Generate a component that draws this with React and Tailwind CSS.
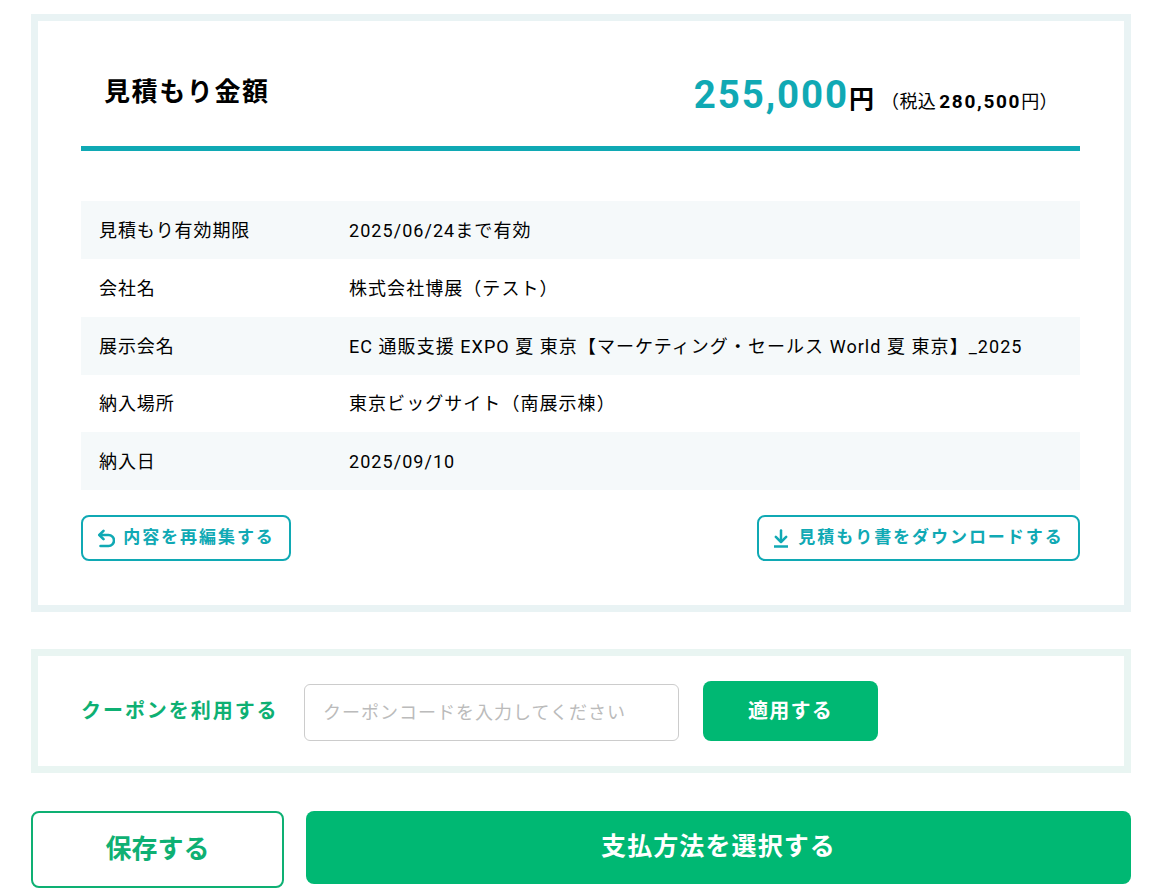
import React from 'react';

const rows = [
    ['見積もり有効期限', '2025/06/24まで有効', 'h-[58px] bg-[#f5f9fa]'],
    ['会社名', '株式会社博展（テスト）', 'h-[58px]'],
    ['展示会名', 'EC 通販支援 EXPO 夏 東京【マーケティング・セールス World 夏 東京】_2025', 'h-[58px] bg-[#f5f9fa]'],
    ['納入場所', '東京ビッグサイト（南展示棟）', 'h-[57px]'],
    ['納入日', '2025/09/10', 'h-[58px] bg-[#f5f9fa]'],
];

const BackIcon = () => (
    <svg width="18" height="19" viewBox="0 0 18 19" fill="none" stroke="currentColor" strokeWidth="2.6" strokeLinecap="round" strokeLinejoin="round">
        <path d="M6.500 1.800 2.300 6 6.500 10.200" />
        <path d="M3 6h8.500a5 5 0 0 1 0 11H3.500" />
    </svg>
);

const DownloadIcon = () => (
    <svg width="16" height="19" viewBox="0 0 16 19" fill="none" stroke="currentColor" strokeWidth="2.500" strokeLinecap="round" strokeLinejoin="round">
        <path d="M8 1.500v11" />
        <path d="M2.800 7.800 8 13l5.200-5.200" />
        <path d="M1 17.500h14" strokeLinecap="butt" />
    </svg>
);

const App = () => {
    return (
        <div className="w-[1157px] h-[896px] overflow-hidden bg-white pt-[14px] pl-[31px] text-black font-['Roboto','Noto_Sans_CJK_JP',sans-serif]">
            {/* 見積もり */}
            <div className="w-[1100px] h-[598px] border-[7px] border-[#e9f3f4] pl-[43px] pr-[44px]">
                <div className="h-[130px] border-b-[5px] border-[#10a9b4] flex items-start justify-between">
                    <h2 className="ml-[23px] mt-[52px] text-[26px] leading-[38px] font-bold tracking-[1.6px]">見積もり金額</h2>
                    <div className="mt-[48px] mr-[22px] flex items-baseline">
                        <span className="text-[38.500px] leading-[52px] font-bold tracking-[1.900px] text-[#10a9b4]">255,000</span>
                        <span className="text-[25px] font-bold">円</span>
                        <span className="ml-[7px] text-[18px] tracking-[0.4px]">（税込</span>
                        <span className="ml-[3px] text-[19px] font-bold tracking-[1.700px]">280,500</span>
                        <span className="text-[18px] tracking-[0.4px]">円）</span>
                    </div>
                </div>

                <div className="mt-[50px]">
                    {rows.map(([label, value, cls]) => (
                        <div key={label} className={`flex items-center text-[18px] tracking-[0.900px] ${cls}`}>
                            <div className="w-[268px] pl-[18px]">{label}</div>
                            <div className="flex-1 tracking-[1.050px]">{value}</div>
                        </div>
                    ))}
                </div>

                <div className="mt-[25px] flex justify-between">
                    <button className="w-[210px] h-[46px] rounded-lg border-2 border-[#10a9b4] text-[#10a9b4] flex items-center justify-center gap-[8px] text-[17px] font-bold tracking-[1.950px]">
                        <BackIcon />
                        内容を再編集する
                    </button>
                    <button className="w-[323px] h-[46px] rounded-lg border-2 border-[#10a9b4] text-[#10a9b4] flex items-center justify-center gap-[9px] text-[17px] font-bold tracking-[1.950px]">
                        <DownloadIcon />
                        見積もり書をダウンロードする
                    </button>
                </div>
            </div>

            {/* クーポン */}
            <div className="mt-[37px] w-[1100px] h-[124px] border-[7px] border-[#e9f5f2] pl-[43px] flex items-center">
                <span className="w-[223px] text-[20px] font-bold tracking-[1.950px] text-[#0eb073] -mt-[1px]">クーポンを利用する</span>
                <input
                    className="w-[375px] h-[57px] mt-[3px] rounded-md border border-[#cccccc] px-[18px] text-[18px] tracking-[1px] placeholder:text-[#bbbbbb] outline-none"
                    placeholder="クーポンコードを入力してください"
                />
                <button className="ml-[24px] w-[175px] h-[60px] rounded-lg bg-[#00b873] text-white text-[20px] font-bold tracking-[1.200px]">適用する</button>
            </div>

            {/* 保存・支払 */}
            <div className="mt-[38px] w-[1100px] flex items-start gap-[22px]">
                <button className="w-[253px] h-[77px] rounded-lg border-2 border-[#0eb073] text-[#0eb073] text-[26px] font-bold">保存する</button>
                <button className="flex-1 h-[73px] rounded-lg bg-[#00b873] text-white text-[25px] font-bold tracking-[1.100px] pb-[2px]">支払方法を選択する</button>
            </div>
        </div>
    );
};

export default App;
